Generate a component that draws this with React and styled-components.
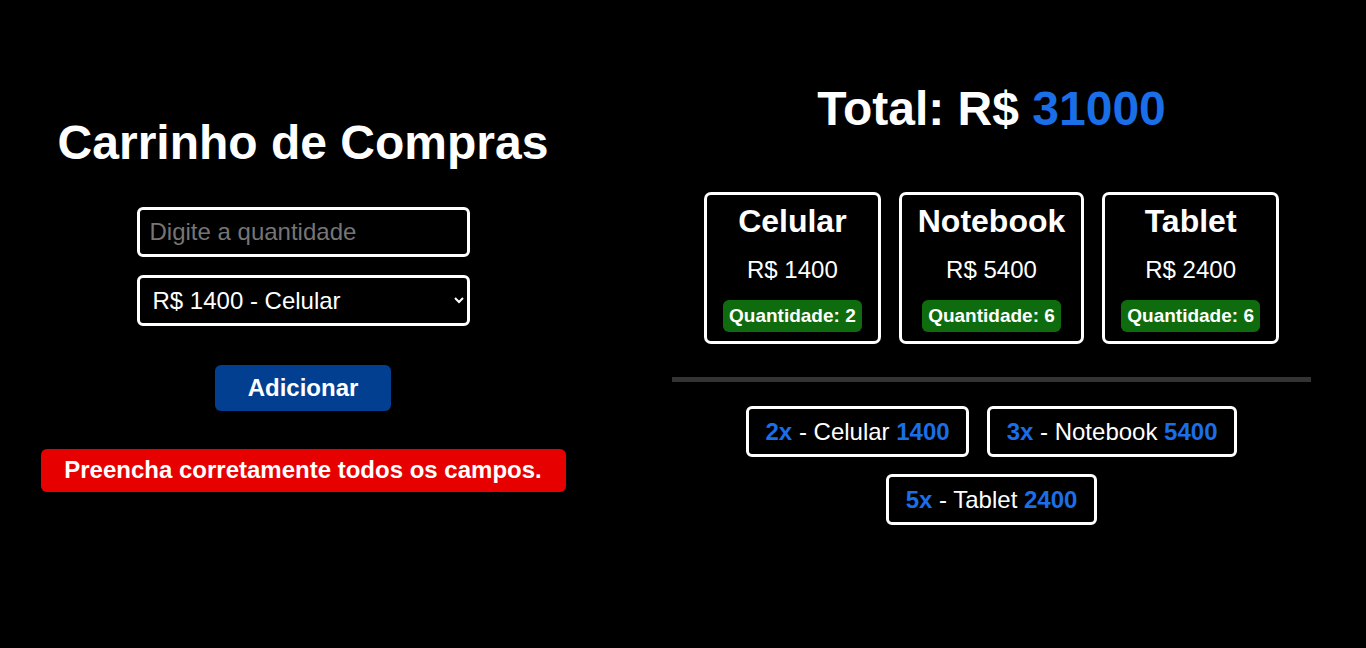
import React from "react";
import styled, { createGlobalStyle } from "styled-components";

const products = [
  { name: "Celular", price: 1400, qty: 2 },
  { name: "Notebook", price: 5400, qty: 6 },
  { name: "Tablet", price: 2400, qty: 6 },
];

const orders = [
  { qty: 2, name: "Celular", price: 1400 },
  { qty: 3, name: "Notebook", price: 5400 },
  { qty: 5, name: "Tablet", price: 2400 },
];

const App = () => {
  return (
    <>
      <GlobalStyle />
      <Page>
        <FormColumn>
          <Title>Carrinho de Compras</Title>
          <Input type="number" placeholder="Digite a quantidade" />
          <Select defaultValue="1400">
            <option value="1400">R$ 1400 - Celular</option>
            <option value="5400">R$ 5400 - Notebook</option>
            <option value="2400">R$ 2400 - Tablet</option>
          </Select>
          <AddButton>Adicionar</AddButton>
          <ErrorMessage>Preencha corretamente todos os campos.</ErrorMessage>
        </FormColumn>

        <CartColumn>
          <Total>
            Total: R$ <Blue>31000</Blue>
          </Total>
          <Cards>
            {products.map((p) => (
              <Card key={p.name}>
                <CardTitle>{p.name}</CardTitle>
                <Price>R$ {p.price}</Price>
                <Badge>Quantidade: {p.qty}</Badge>
              </Card>
            ))}
          </Cards>
          <Divider />
          <OrderList>
            {orders.map((o) => (
              <OrderItem key={o.name}>
                <Blue>{o.qty}x</Blue> - {o.name} <Blue>{o.price}</Blue>
              </OrderItem>
            ))}
          </OrderList>
        </CartColumn>
      </Page>
    </>
  );
};

const GlobalStyle = createGlobalStyle`
  body {
    margin: 0;
    background: #000;
    color: #fff;
    font-family: "Liberation Sans", Arial, sans-serif;
  }
`;

const Page = styled.main`
  display: grid;
  grid-template-columns: 606px 1fr;
  column-gap: 11px;
  min-height: 606px;
`;

const FormColumn = styled.section`
  display: flex;
  flex-direction: column;
  align-items: center;
  justify-content: center;
`;

const CartColumn = styled.section`
  display: flex;
  flex-direction: column;
  align-items: center;
  justify-content: center;
`;

const Title = styled.h1`
  font-size: 48px;
  line-height: 55px;
  margin: 0 0 37px;
`;

const Input = styled.input`
  box-sizing: border-box;
  width: 333px;
  height: 50px;
  padding: 0 10px;
  background: #000;
  color: #fff;
  border: 3px solid #fff;
  border-radius: 6px;
  font-family: inherit;
  font-size: 24px;
  outline: none;

  &::placeholder {
    color: #757575;
  }
`;

const Select = styled.select`
  box-sizing: border-box;
  width: 333px;
  height: 51px;
  margin-top: 18px;
  padding: 0 8px 0 9px;
  background: #000;
  color: #fff;
  border: 3px solid #fff;
  border-radius: 6px;
  font-family: inherit;
  font-size: 24px;
  outline: none;
`;

const AddButton = styled.button`
  margin-top: 39px;
  height: 46px;
  padding: 0 33px;
  background: #023f91;
  color: #fff;
  border: none;
  border-radius: 6px;
  font-family: inherit;
  font-size: 24px;
  font-weight: bold;
  cursor: pointer;
`;

const ErrorMessage = styled.p`
  box-sizing: border-box;
  width: 525px;
  height: 43px;
  margin: 38px 0 0;
  display: flex;
  align-items: center;
  justify-content: center;
  background: #e60000;
  border-radius: 6px;
  font-size: 24px;
  font-weight: bold;
`;

const Total = styled.h2`
  font-size: 48px;
  line-height: 55px;
  margin: 0 0 56px;
`;

const Blue = styled.span`
  color: #1a6ee8;
  font-weight: bold;
`;

const Cards = styled.div`
  display: flex;
  gap: 18px;
`;

const Card = styled.article`
  display: flex;
  flex-direction: column;
  align-items: center;
  gap: 16px;
  padding: 8px 16px 9px;
  border: 3px solid #fff;
  border-radius: 7px;
`;

const CardTitle = styled.h3`
  margin: 0;
  font-size: 32px;
  line-height: 37px;
`;

const Price = styled.p`
  margin: 0;
  font-size: 24px;
  line-height: 28px;
`;

const Badge = styled.span`
  display: flex;
  align-items: center;
  height: 32px;
  padding: 0 6px;
  background: #0e6c0e;
  border-radius: 6px;
  font-size: 19px;
  font-weight: bold;
`;

const Divider = styled.hr`
  width: 639px;
  height: 5px;
  margin: 33px 0 24px;
  border: none;
  background: #333;
`;

const OrderList = styled.ul`
  display: flex;
  flex-wrap: wrap;
  justify-content: center;
  gap: 17px 18px;
  max-width: 520px;
  margin: 0;
  padding: 0;
  list-style: none;
`;

const OrderItem = styled.li`
  padding: 8px 16.5px;
  border: 3px solid #fff;
  border-radius: 6px;
  font-size: 24px;
  line-height: 29px;
`;

export default App;
